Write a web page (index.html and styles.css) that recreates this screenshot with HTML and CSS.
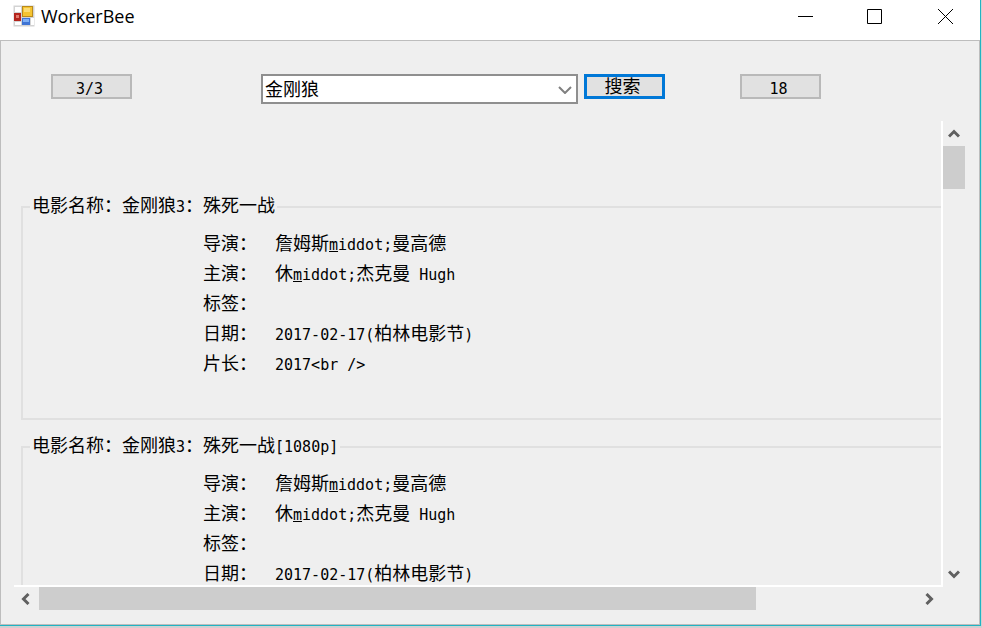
FILE: index.html
```html
<!DOCTYPE html>
<html lang="zh-CN">
<head>
    <meta charset="UTF-8">
    <meta name="viewport" content="width=device-width, initial-scale=1.0">
    <title>WorkerBee</title>
    <link rel="stylesheet" href="styles.css">
</head>
<body>
    <div class="window">
        <header class="titlebar">
            <svg class="app-icon" width="22" height="22" viewBox="0 0 22 22">
                <rect x="0.5" y="0.5" width="21" height="21" fill="#d3d3d3"/>
                <rect x="2" y="2" width="6" height="5" fill="#fff"/>
                <rect x="1" y="8" width="7" height="8" fill="#b3241c"/>
                <rect x="3" y="10" width="3" height="3" fill="#e27a6d"/>
                <rect x="2" y="17" width="6" height="3" fill="#fff"/>
                <rect x="9" y="1" width="11" height="11" fill="#b98a1c"/>
                <rect x="10" y="2" width="9" height="9" fill="#f5c431"/>
                <rect x="11" y="3" width="6" height="4" fill="#fbdc74"/>
                <rect x="9" y="13" width="8" height="7" fill="#3f74d4"/>
                <rect x="10" y="14" width="6" height="3" fill="#7fb0f5"/>
                <rect x="18" y="13" width="3" height="7" fill="#fff"/>
            </svg>
            <h1>WorkerBee</h1>
            <div class="window-buttons">
                <button type="button" aria-label="最小化">
                    <svg width="16" height="16" viewBox="0 0 16 16"><path d="M1 8.500h15"/></svg>
                </button>
                <button type="button" aria-label="最大化">
                    <svg width="16" height="16" viewBox="0 0 16 16"><path d="M0.500 1.500h14v14h-14z"/></svg>
                </button>
                <button type="button" aria-label="关闭">
                    <svg width="16" height="16" viewBox="0 0 16 16"><path d="M1 1l15 15M16 1L1 16"/></svg>
                </button>
            </div>
        </header>

        <main>
            <form class="toolbar">
                <button type="button" class="btn"><span class="en">3/3</span></button>
                <div class="search">
                    <div class="combo">
                        <select aria-label="电影名称">
                            <option>金刚狼</option>
                        </select>
                        <svg width="14" height="8" viewBox="0 0 14 8"><path d="M1 1l6 6 6-6"/></svg>
                    </div>
                    <button type="button" class="btn btn-default">搜索</button>
                </div>
                <button type="button" class="btn"><span class="en">18</span></button>
            </form>

            <div class="results">
                <div class="list">
                    <fieldset>
                        <legend>电影名称：金刚狼<span class="en">3</span>：殊死一战</legend>
                        <dl>
                            <dt>导演：</dt>
                            <dd>詹姆斯<span class="en"><u>m</u>iddot;</span>曼高德</dd>
                            <dt>主演：</dt>
                            <dd>休<span class="en"><u>m</u>iddot;</span>杰克曼<span class="en"> Hugh</span></dd>
                            <dt>标签：</dt>
                            <dd></dd>
                            <dt>日期：</dt>
                            <dd><span class="en">2017-02-17(</span>柏林电影节<span class="en">)</span></dd>
                            <dt>片长：</dt>
                            <dd><span class="en">2017&lt;br /&gt;</span></dd>
                        </dl>
                    </fieldset>
                    <fieldset>
                        <legend>电影名称：金刚狼<span class="en">3</span>：殊死一战<span class="en">[1080p]</span></legend>
                        <dl>
                            <dt>导演：</dt>
                            <dd>詹姆斯<span class="en"><u>m</u>iddot;</span>曼高德</dd>
                            <dt>主演：</dt>
                            <dd>休<span class="en"><u>m</u>iddot;</span>杰克曼<span class="en"> Hugh</span></dd>
                            <dt>标签：</dt>
                            <dd></dd>
                            <dt>日期：</dt>
                            <dd><span class="en">2017-02-17(</span>柏林电影节<span class="en">)</span></dd>
                        </dl>
                    </fieldset>
                </div>

                <div class="scroll scroll-y">
                    <button type="button" aria-label="向上滚动">
                        <svg width="12" height="9" viewBox="0 0 12 9"><path d="M1 7.500l5-5 5 5"/></svg>
                    </button>
                    <div class="track"><div class="thumb"></div></div>
                    <button type="button" aria-label="向下滚动">
                        <svg width="12" height="9" viewBox="0 0 12 9"><path d="M1 1.500l5 5 5-5"/></svg>
                    </button>
                </div>

                <div class="scroll scroll-x">
                    <button type="button" aria-label="向左滚动">
                        <svg width="9" height="12" viewBox="0 0 9 12"><path d="M7.500 1l-5 5 5 5"/></svg>
                    </button>
                    <div class="track"><div class="thumb"></div></div>
                    <button type="button" aria-label="向右滚动">
                        <svg width="9" height="12" viewBox="0 0 9 12"><path d="M1.500 1l5 5-5 5"/></svg>
                    </button>
                </div>
            </div>
        </main>
    </div>
</body>
</html>
```
FILE: styles.css
```css
* {
    box-sizing: border-box;
}
body {
    margin: 0;
    height: 100vh;
    padding: 0 1px 2px 0;
    background: #d0d0d0;
    font-family: "Noto Sans CJK SC", sans-serif;
    font-size: 18px;
    line-height: 30px;
    color: #000;
}
button {
    padding: 0;
    font: inherit;
    color: inherit;
}
.en {
    font-family: "DejaVu Sans Mono", monospace;
    font-size: 15px;
    line-height: 1;
    white-space: pre;
}
.window {
    display: flex;
    flex-direction: column;
    height: 100%;
    border-right: 1px solid #1fb4c4;
    border-bottom: 1px solid #1fb4c4;
    background: #efefef;
}

/* title bar */
.titlebar {
    display: flex;
    align-items: center;
    height: 40px;
    padding: 0 0 8px 13px;
    background: #fff;
}
.titlebar h1 {
    margin: 0 0 0 6px;
    font-family: "Open Sans", sans-serif;
    font-size: 18px;
    font-weight: normal;
}
.window-buttons {
    display: flex;
    margin-left: auto;
}
.window-buttons button {
    display: flex;
    align-items: center;
    justify-content: center;
    width: 70px;
    height: 32px;
    border: 0;
    background: none;
}
.window-buttons path {
    fill: none;
    stroke: #000;
}

main {
    flex: 1;
    display: flex;
    flex-direction: column;
    min-height: 0;
    padding: 33px 14px 14px 13px;
    border: 1px solid #bdbdbd;
}

/* toolbar */
.toolbar {
    display: flex;
    align-items: flex-start;
    justify-content: space-between;
    padding: 0 144px 0 37px;
}
.search {
    display: flex;
    gap: 6px;
    margin-left: 54px;
}
.btn {
    width: 81px;
    height: 25px;
    padding: 0 4px 0 0;
    border: 2px solid #b9b9b9;
    background: #e1e1e1;
    line-height: 20px;
}
.btn-default {
    padding-bottom: 2px;
    border: 3px solid #0078d7;
    line-height: 17px;
}
.combo {
    position: relative;
}
.combo select {
    display: block;
    appearance: none;
    width: 317px;
    height: 30px;
    padding: 0 30px 2px 2px;
    border: 2px solid #8f8f8f;
    border-radius: 0;
    background: #fff;
    font: inherit;
    line-height: 24px;
    color: #000;
}
.combo svg {
    position: absolute;
    top: 12px;
    right: 6px;
    pointer-events: none;
}
.combo path {
    fill: none;
    stroke: #808080;
    stroke-width: 2;
}

/* results */
.results {
    flex: 1;
    display: grid;
    grid-template-columns: 1fr 22px;
    grid-template-rows: 1fr 23px;
    min-height: 0;
    margin-top: 17px;
}
.list {
    overflow: hidden;
    padding: 68px 0 0 7px;
    border-right: 2px solid #fff;
    border-bottom: 2px solid #fff;
}
fieldset {
    width: 110%;
    height: 231px;
    margin: 0 0 9px;
    padding: 2px 0 0 180px;
    border: 2px solid #e0e0e0;
}
legend {
    margin-left: -173px;
    padding: 0 2px 6px;
}
dl {
    display: grid;
    grid-template-columns: 72px 1fr;
    grid-auto-rows: 30px;
    margin: 0;
}
dd {
    margin: 0;
}

/* scroll bars */
.scroll {
    display: flex;
}
.scroll-y {
    flex-direction: column;
}
.scroll button {
    display: flex;
    align-items: center;
    justify-content: center;
    width: 25px;
    height: 25px;
    border: 0;
    background: none;
}
.scroll-y button {
    width: 22px;
}
.scroll-x button {
    height: 23px;
    padding-right: 3px;
}
.scroll path {
    fill: none;
    stroke: #606060;
    stroke-width: 3;
}
.track {
    flex: 1;
}
.thumb {
    background: #cdcdcd;
}
.scroll-y .thumb {
    height: 43px;
}
.scroll-x .thumb {
    width: 81.6%;
    height: 100%;
}
```
